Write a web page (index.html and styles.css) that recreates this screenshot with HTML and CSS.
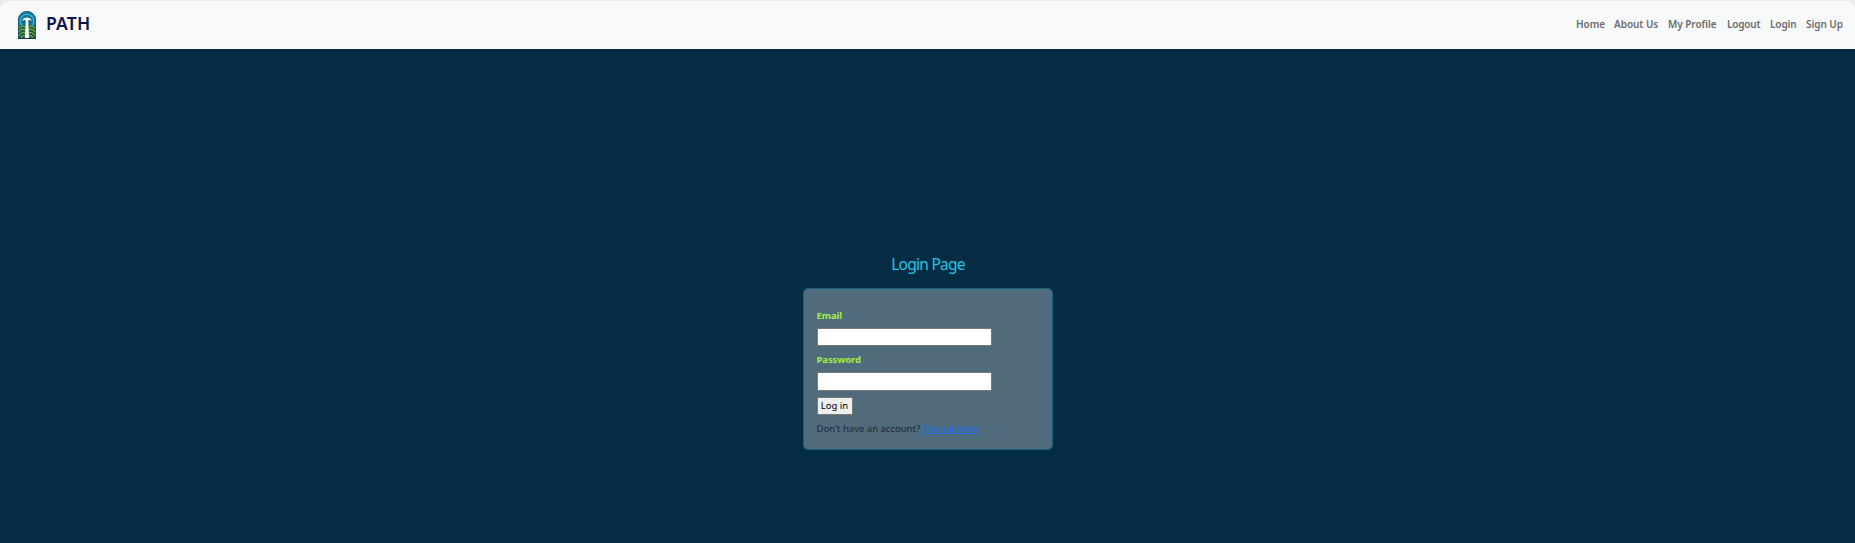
FILE: index.html
```
<!DOCTYPE html>
<html lang="en">
<head>
<meta charset="utf-8">
<title>PATH</title>
<link rel="stylesheet" href="styles.css">
</head>
<body>
<header class="frame">
  <nav class="navbar">
    <a class="brand">
      <svg class="logo" viewBox="0 0 18 28" width="18" height="28">
        <defs><clipPath id="arch"><path d="M0 28V9a9 9 0 0 1 18 0v19z"/></clipPath></defs>
        <g clip-path="url(#arch)">
          <rect width="18" height="28" fill="#17678a"/>
          <g fill="none" stroke-width="1.4">
            <circle cx="9" cy="10" r="8.3" stroke="#1e86a8"/>
            <circle cx="9" cy="10" r="6.6" stroke="#35b4d2"/>
            <circle cx="9" cy="10" r="5" stroke="#1b7898"/>
          </g>
          <path d="M0 18Q4 12 9 14Q14 12 18 18V28H0z" fill="#1d5636"/>
          <g fill="none" stroke="#72b443" stroke-width="1.1">
            <path d="M.5 18Q4 13.500 7 16M.5 21.500Q4 16.500 7 19M1 25Q4 20 7 22M3 27Q5 23.500 7 25"/>
            <path d="M17.500 18Q14 13.500 11 16M17.500 21.500Q14 16.500 11 19M17 25Q14 20 11 22M15 27Q13 23.500 11 25"/>
          </g>
          <path d="M4.300 10Q5 6.500 9 6.500T13.700 10Q11.500 8.500 10.300 9.500L11.200 27H6.800L7.700 9.500Q6.500 8.500 4.300 10z" fill="#eef5f7"/>
          <path d="M0 27.500H18" stroke="#173247" stroke-width="1.200"/>
        </g>
        <path d="M.5 28V9a8.500 8.500 0 0 1 17 0v19" fill="none" stroke="#195570" stroke-width=".8"/>
      </svg>
      <span class="brand-name">PATH</span>
    </a>
    <div class="links">
      <a class="home">Home</a><a class="about">About Us</a><a class="profile">My Profile</a><a class="logout">Logout</a><a class="login">Login</a><a class="signup">Sign Up</a>
    </div>
  </nav>
</header>
<main class="page">
  <h1 class="title">Login Page</h1>
  <form class="card">
    <label class="label" for="email">Email</label>
    <input class="field" id="email" type="email">
    <label class="label second" for="password">Password</label>
    <input class="field tall" id="password" type="password">
    <button class="submit" type="button">Log in</button>
    <p class="note"><span class="question">Don't have an account?</span><a class="register">Sign up here</a></p>
  </form>
</main>
</body>
</html>
```
FILE: styles.css
```
* { box-sizing: border-box; }
body {
  margin: 0;
  height: 543px;
  overflow: hidden;
  background: #042d43;
  font-family: "Noto Sans", "Open Sans", sans-serif;
  font-size: 10px;
  white-space: nowrap;
}
.frame { height: 49px; background: #ececee; padding-top: 1px; }
.navbar {
  height: 48px;
  display: flex;
  justify-content: space-between;
  background: #f8f9fb;
  border-radius: 9px 9px 0 0;
  padding: 0 12px 0 18px;
}
.brand { display: flex; padding-top: 10px; }
.logo { display: block; }
.brand-name {
  margin-left: 10px;
  font-size: 17.500px;
  line-height: 24px;
  font-weight: 600;
  letter-spacing: .2px;
  color: #10134a;
}
.links {
  display: flex;
  gap: 10px;
  padding-top: 15px;
  line-height: 16px;
  font-size: 10px;
  font-weight: 600;
  letter-spacing: -.05px;
  color: #6b6b6c;
}
.home { width: 28px; }
.about { width: 44px; }
.profile { width: 49px; }
.logout { width: 33px; letter-spacing: -.2px; }
.login { width: 26px; letter-spacing: -.1px; }
.signup { width: 37px; }
.page {
  display: flex;
  flex-direction: column;
  align-items: center;
  padding-top: 203px;
}
.title {
  margin: 0 0 12px;
  padding-left: 1px;
  font-size: 15.500px;
  line-height: 24px;
  font-weight: 400;
  letter-spacing: -.75px;
  color: #25c5e8;
}
.card {
  width: 250px;
  height: 162px;
  display: flex;
  flex-direction: column;
  align-items: flex-start;
  padding: 19px 13px 0;
  background: #506b7c;
  border: 1px solid #17617f;
  border-radius: 5px;
}
.label {
  height: 16px;
  line-height: 15px;
  margin-bottom: 4px;
  font-size: 9.500px;
  font-weight: 700;
  letter-spacing: -.1px;
  color: #a5ee45;
}
.second { margin-top: 6px; }
.field {
  width: 175px;
  height: 18px;
  padding: 0 2px;
  border: 1px solid #77787a;
  border-radius: 0;
  background: #fff;
  outline: none;
}
.tall { height: 19px; }
.submit {
  width: 36px;
  height: 18px;
  margin-top: 6px;
  padding: 0 0 1px;
  border: 1px solid #77787a;
  border-radius: 0;
  background: #efefef;
  color: #000;
  font: 9.500px/15px "Noto Sans", sans-serif;
}
.note {
  display: flex;
  margin: 6px 0 0;
  font-size: 9.500px;
  line-height: 16px;
  color: #20282f;
}
.question { width: 105px; }
.register { color: #1b70f5; text-decoration: underline; letter-spacing: .05px; }
```
